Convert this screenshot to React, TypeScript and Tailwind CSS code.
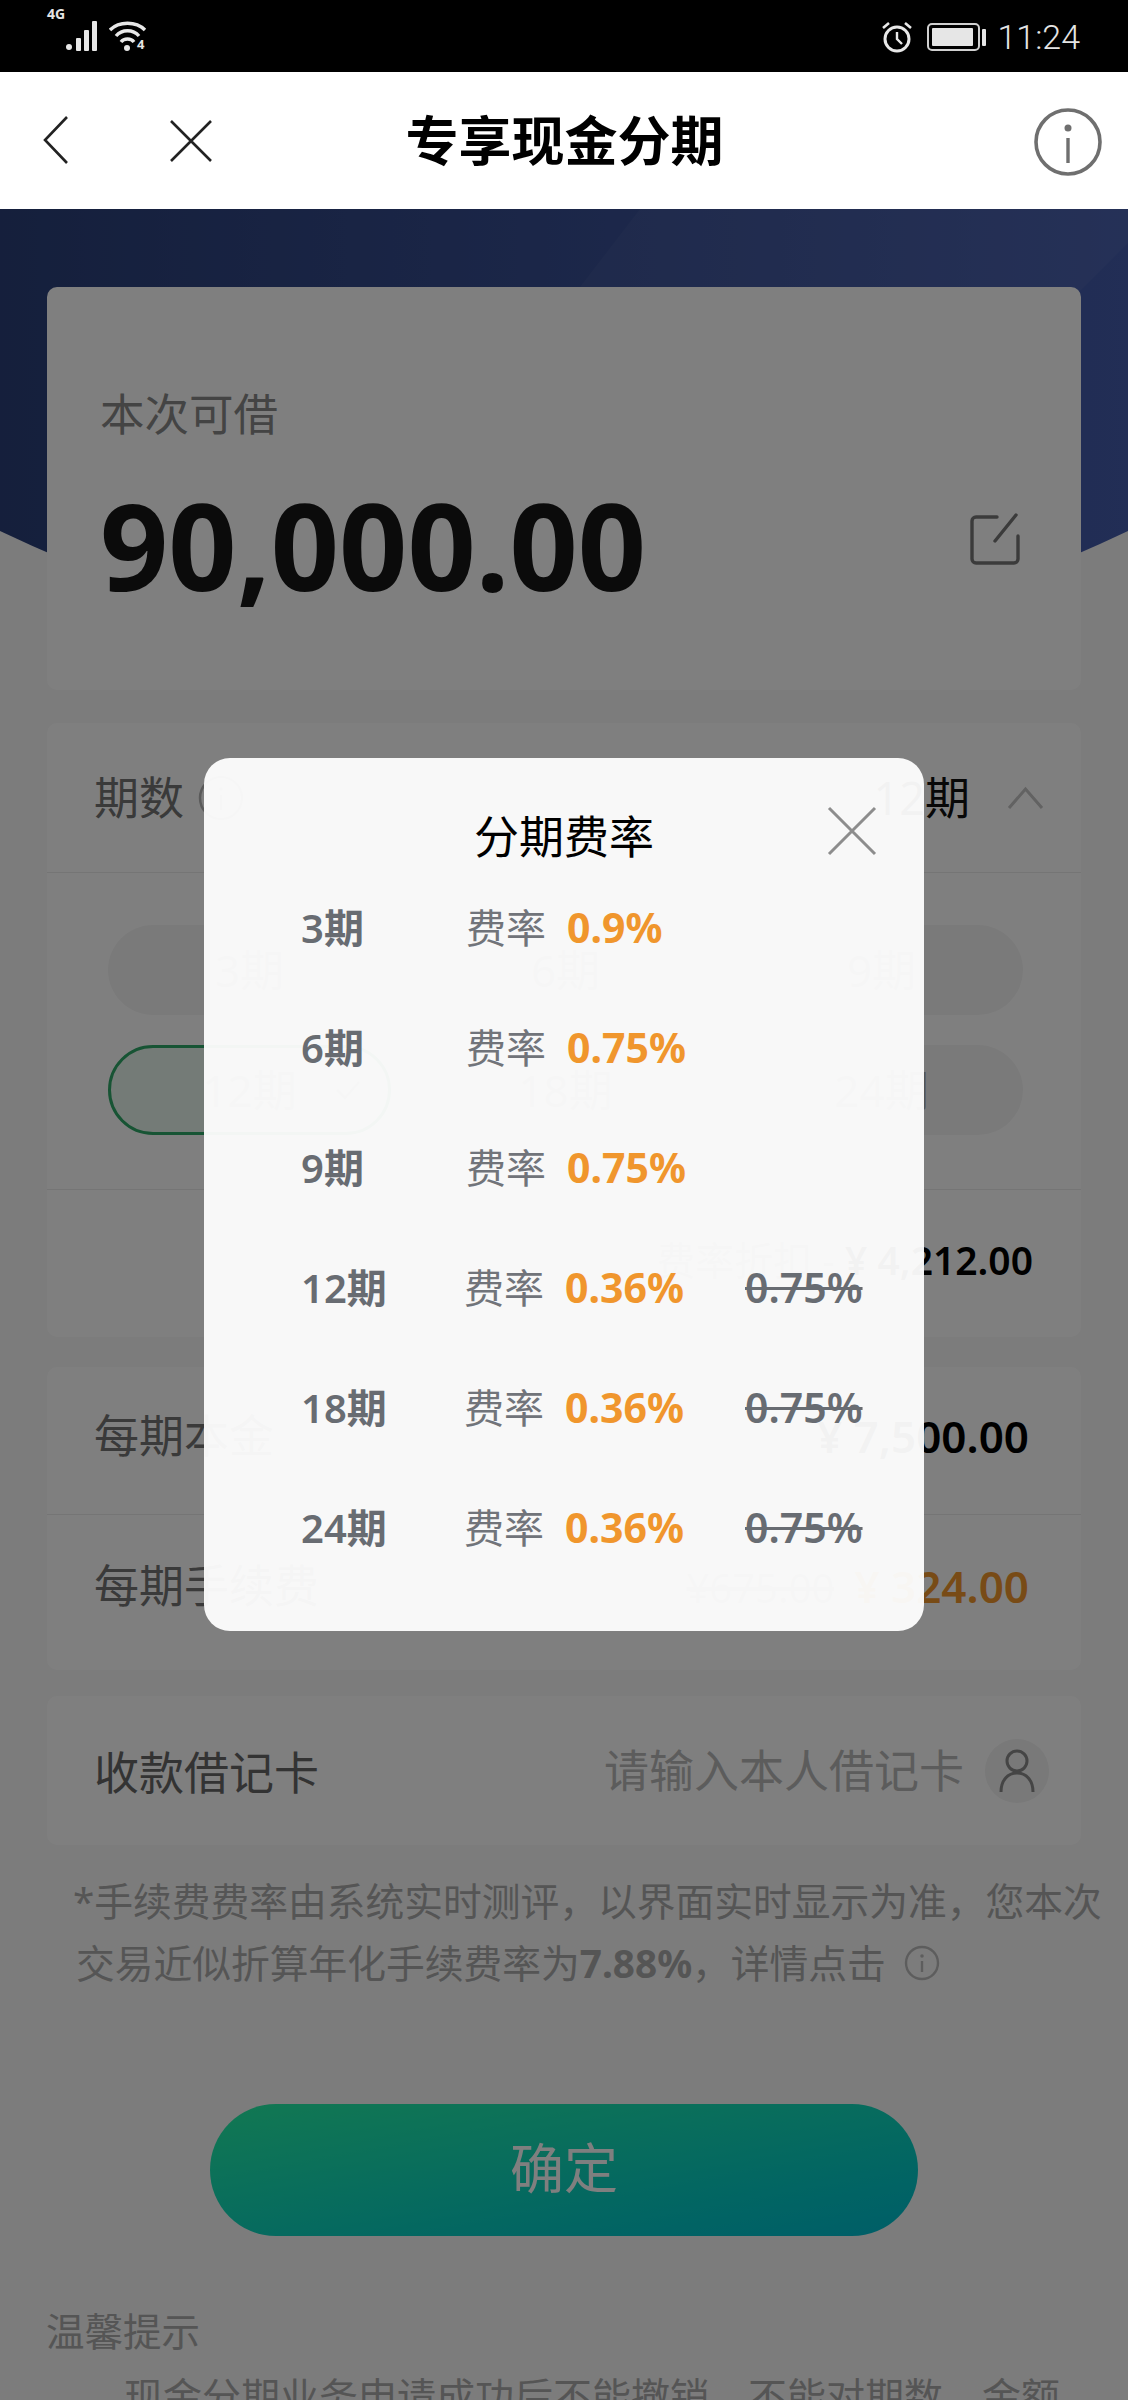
const rates = [
  { p: "3期", r: "0.9%", shift: true },
  { p: "6期", r: "0.75%", shift: true },
  { p: "9期", r: "0.75%", shift: true },
  { p: "12期", r: "0.36%", old: "0.75%" },
  { p: "18期", r: "0.36%", old: "0.75%" },
  { p: "24期", r: "0.36%", old: "0.75%" },
];

function Pill({ label, selected }: { label: string; selected?: boolean }) {
  return (
    <div
      className={
        selected
          ? "relative flex h-[90px] items-center justify-center rounded-full border-[3px] border-[#2fa868] bg-[#e9f6ee] text-[44px] text-[#a0a8a2]"
          : "flex h-[90px] items-center justify-center rounded-full bg-[#f5f5f5] text-[44px] text-[#a8a8a8]"
      }
    >
      {label}
      {selected && (
        <svg className="absolute right-[26px] top-[30px]" width="28" height="24" viewBox="0 0 28 24" fill="none" stroke="#b0b0b0" strokeWidth="2.5">
          <path d="M3 12l8 8L25 4" />
        </svg>
      )}
    </div>
  );
}

function StatusBar() {
  return (
    <div className="relative flex h-[72px] items-center justify-between bg-black pl-[47px] pr-[48px] text-[#e4e4e4]">
      <div className="flex items-start">
        <span className="mt-[-14px] w-[18px] text-[14px] font-bold leading-[14px]">4G</span>
        <svg width="34" height="30" viewBox="0 0 34 30" fill="#e8e8e8" className="ml-[1px]">
          <circle cx="3" cy="26" r="3" />
          <rect x="10" y="17" width="5" height="13" rx="1" />
          <rect x="18" y="9" width="5" height="21" rx="1" />
          <rect x="26" y="0" width="5" height="30" rx="1" />
        </svg>
        <svg width="38" height="30" viewBox="0 0 38 30" fill="none" stroke="#e8e8e8" strokeWidth="3.4" className="ml-[9px]">
          <path d="M1 9C10 0 27 0 36 9" />
          <path d="M7 15C13 8 24 8 30 15" />
          <path d="M12 21C15 17 22 17 25 21" />
          <circle cx="18" cy="27" r="3" fill="#e8e8e8" stroke="none" />
        </svg>
        <span className="ml-[-10px] mt-[17px] text-[13px] font-bold leading-[13px]">4</span>
      </div>
      <div className="mt-[2px] flex items-center">
        <svg width="32" height="32" viewBox="0 0 32 32" fill="none" stroke="#e8e8e8" strokeWidth="3">
          <circle cx="16" cy="18" r="12" />
          <path d="M16 11v7l5 5" strokeWidth="2.4" />
          <path d="M2 7l6-5M30 7l-6-5" strokeWidth="2.6" />
        </svg>
        <div className="ml-[14px] flex h-[28px] w-[53px] items-center rounded-[5px] border-2 border-[#d0d0d0] p-[3px]">
          <div className="h-full w-[41px] rounded-[1px] bg-[#e6e6e6]" />
        </div>
        <div className="ml-[2px] h-[17px] w-[4px] rounded-[1px] bg-[#e6e6e6]" />
        <span className="ml-[11px] font-['Roboto',sans-serif] text-[34px] font-light leading-[40px]">11:24</span>
      </div>
    </div>
  );
}

function NavBar() {
  return (
    <div className="relative flex h-[137px] items-center bg-white pl-[43px] pr-[26px]">
      <svg width="26" height="48" viewBox="0 0 26 48" fill="none" stroke="#222" strokeWidth="2.6" className="mt-[-2px]">
        <path d="M24 1L2 24l22 23" />
      </svg>
      <svg width="44" height="42" viewBox="0 0 44 42" fill="none" stroke="#222" strokeWidth="2.6" className="ml-[100px]">
        <path d="M2 1l40 40M42 1L2 41" />
      </svg>
      <div className="flex-1 pr-[118px] text-center text-[53px] font-bold leading-[60px] text-black">专享现金分期</div>
      <svg width="68" height="68" viewBox="0 0 68 68" fill="none" stroke="#6f6f6f" strokeWidth="3.6" className="mt-[3px]">
        <circle cx="34" cy="34" r="32" />
        <circle cx="34" cy="20" r="3.5" fill="#6f6f6f" stroke="none" />
        <path d="M34 30v25" strokeWidth="3.4" />
      </svg>
    </div>
  );
}

export default function App() {
  return (
    <div className="h-[2400px] w-[1128px] overflow-hidden bg-white font-['Noto_Sans','Noto_Sans_CJK_SC',sans-serif]">
      <StatusBar />
      <NavBar />
      <div className="relative h-[2191px] overflow-hidden bg-[#f8f8f8]">
        <svg className="absolute left-0 top-0" width="1128" height="560" viewBox="0 0 1128 560">
          <defs>
            <linearGradient id="bn" x1="0" y1="0" x2="1" y2="0">
              <stop offset="0" stopColor="#2a3f78" />
              <stop offset="1" stopColor="#445cac" />
            </linearGradient>
          </defs>
          <path d="M0 0H1128V322Q564 590 0 322Z" fill="url(#bn)" />
          <path d="M580 78L640 0H1128V34L1072 90H574Z" fill="#ffffff" fillOpacity="0.04" />
        </svg>

        <div className="relative px-[47px]">
          <div className="mt-[78px] flex h-[403px] flex-col rounded-[10px] bg-white px-[53px]">
            <div className="mt-[93px] text-[44.500px] leading-[68px] text-[#888]">本次可借</div>
            <div className="mt-[17px] flex items-center justify-between pr-[8px]">
              <span className="text-[119.500px] font-bold leading-[160px] text-[#161616]">90,000.00</span>
              <svg width="50" height="52" viewBox="0 0 50 52" fill="none" stroke="#777" strokeWidth="3.4" strokeLinecap="round" className="mt-[-13px]">
                <path d="M27 4H6a4 4 0 0 0-4 4v38a4 4 0 0 0 4 4h38a4 4 0 0 0 4-4V23" />
                <path d="M25 28L46 2" />
              </svg>
            </div>
          </div>

          <div className="mt-[33px] rounded-[10px] bg-white">
            <div className="flex h-[150px] items-center justify-between border-b border-[#eaeaea] pl-[47px] pr-[37px]">
              <div className="flex items-center">
                <span className="text-[45px] text-[#757575]">期数</span>
                <svg width="46" height="46" viewBox="0 0 46 46" fill="none" stroke="#b5b5b5" strokeWidth="2.5" className="ml-[14px]">
                  <circle cx="23" cy="23" r="21" />
                  <circle cx="23" cy="14" r="2" fill="#b5b5b5" stroke="none" />
                  <path d="M23 20v15" />
                </svg>
              </div>
              <div className="flex items-center">
                <span className="text-[45px] text-[#111]">12期</span>
                <svg width="37" height="24" viewBox="0 0 37 24" fill="none" stroke="#c4c4c4" strokeWidth="3" className="ml-[37px]">
                  <path d="M2 22L18.500 3 35 22" />
                </svg>
              </div>
            </div>
            <div className="grid h-[316px] grid-cols-3 content-start gap-x-[33px] gap-y-[30px] pl-[61px] pr-[58px] pt-[52px]">
              <Pill label="3期" />
              <Pill label="6期" />
              <Pill label="9期" />
              <Pill label="12期" selected />
              <Pill label="18期" />
              <Pill label="24期" />
            </div>
            <div className="flex h-[148px] items-center justify-end whitespace-pre border-t border-[#eaeaea] pb-[6px] pr-[48px]">
              <span className="text-[39px] text-[#999]">费率折扣 - </span>
              <span className="text-[39px] font-semibold text-black">¥ 4,212.00</span>
            </div>
          </div>

          <div className="mt-[30px] rounded-[10px] bg-white">
            <div className="flex h-[148px] items-center justify-between whitespace-pre border-b border-[#eaeaea] px-[47px] pb-[10px] pr-[52px]">
              <span className="text-[45px] text-[#757575]">每期本金</span>
              <span className="text-[44px] font-semibold text-black">¥ 7,500.00</span>
            </div>
            <div className="flex h-[155px] items-center justify-between whitespace-pre pb-[13px] pl-[47px] pr-[52px]">
              <span className="text-[45px] text-[#757575]">每期手续费</span>
              <div className="flex items-baseline gap-[20px]">
                <span className="text-[40px] text-[#aaa] line-through">¥675.00</span>
                <span className="text-[44px] font-semibold text-[#f0962d]">¥ 324.00</span>
              </div>
            </div>
          </div>

          <div className="mt-[26px] flex h-[149px] items-center justify-between rounded-[10px] bg-white pl-[47px] pr-[32px]">
            <span className="mt-[5px] text-[45px] text-[#666]">收款借记卡</span>
            <div className="flex items-center">
              <span className="text-[45px] text-[#b8b8b8]">请输入本人借记卡</span>
              <div className="ml-[21px] flex h-[64px] w-[64px] items-center justify-center rounded-full bg-[#f2f2f2]">
                <svg width="36" height="44" viewBox="0 0 36 44" fill="none" stroke="#8a8a8a" strokeWidth="3">
                  <circle cx="18" cy="12" r="10" />
                  <path d="M2 43c0-12 7-19 16-19s16 7 16 19" />
                </svg>
              </div>
            </div>
          </div>
        </div>

        <div className="mt-[25px] whitespace-nowrap pl-[73px] text-[38.750px] leading-[62px] text-[#aaa]">
          <div>*手续费费率由系统实时测评，以界面实时显示为准，您本次</div>
          <div className="flex items-center pl-[3px]">
            交易近似折算年化手续费率为<span className="font-bold">7.88%</span>，详情点击
            <svg width="36" height="36" viewBox="0 0 36 36" fill="none" stroke="#bbb" strokeWidth="2.4" className="ml-[18px]">
              <circle cx="18" cy="18" r="16" />
              <circle cx="18" cy="11" r="1.800" fill="#bbb" stroke="none" />
              <path d="M18 16v11" />
            </svg>
          </div>
        </div>

        <button className="mx-auto mt-[110px] flex h-[132px] w-[708px] items-center justify-center rounded-full bg-gradient-to-br from-[#24f0a4] to-[#00bcd0] pb-[4px] text-[54px] text-white">
          确定
        </button>

        <div className="mt-[64px] whitespace-nowrap pl-[46px] text-[38.500px] leading-[62px] text-[#aaa]">温馨提示</div>
        <div className="mt-[3px] whitespace-nowrap pl-[124px] text-[39px] leading-[62px] text-[#aaa]">现金分期业务申请成功后不能撤销，不能对期数、金额</div>

        <div className="absolute inset-0 bg-black/50" />

        <div className="absolute left-[204px] top-[549px] h-[873px] w-[720px] rounded-[26px] bg-white/95">
          <div className="relative flex h-[110px] items-end justify-center">
            <span className="mb-[-1px] text-[45px] leading-[64px] text-black">分期费率</span>
            <svg width="50" height="50" viewBox="0 0 50 50" fill="none" stroke="#8d8d8d" strokeWidth="3" className="absolute right-[47px] top-[48px]">
              <path d="M2 2l46 46M48 2L2 48" />
            </svg>
          </div>
          <div className="pl-[97px]">
            {rates.map((row) => (
              <div key={row.p} className="flex h-[120px] items-center">
                <span className="w-[163px] text-[40px] font-semibold text-[#686c72]">{row.p}</span>
                <span className={row.shift ? "ml-[2px] text-[40px] text-[#71747a]" : "text-[40px] text-[#71747a]"}>费率</span>
                <span className="ml-[21px] w-[180px] text-[41px] font-bold text-[#f0962d]">{row.r}</span>
                {row.old && (
                  <span className="text-[41px] font-semibold text-[#686c72] line-through decoration-[3px]">{row.old}</span>
                )}
              </div>
            ))}
          </div>
        </div>
      </div>
    </div>
  );
}
